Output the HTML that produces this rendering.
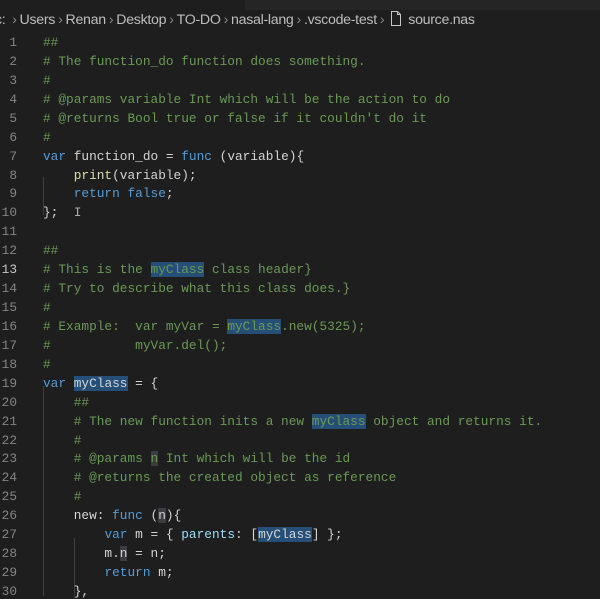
<!DOCTYPE html>
<html><head><meta charset="utf-8"><style>
html,body{margin:0;padding:0;background:#1e1e1e;width:600px;height:596px;overflow:hidden}
.top{position:absolute;left:0;top:0;width:600px;height:10px;background:#252526}
.tab{position:absolute;left:0;top:0;width:245px;height:10px;background:#1e1e1e}
.bc{position:absolute;left:-5px;top:11px;font:14.2px "Liberation Sans",sans-serif;color:#bdbdbd;white-space:nowrap;letter-spacing:-0.3px}
.bc span.s{color:#8a8a8a;margin:0 3px}
.ln{position:absolute;left:0;width:17px;text-align:right;font:12.8px "Liberation Mono",monospace;color:#858585}
.code{position:absolute;left:43px;font:12.8px "Liberation Mono",monospace;color:#d4d4d4;white-space:pre}
.c{color:#6a9955}.k{color:#569cd6}.f{color:#dcdcaa}.v{color:#9cdcfe}.n{color:#b5cea8}
.h{background:#264f78}.h2{background:#3a3d41}
.g{position:absolute;width:1px;background:#404040}
</style></head><body>
<div class="top"><div class="tab"></div></div>
<div class="bc">c: <span class="s">›</span>Users<span class="s">›</span>Renan<span class="s">›</span>Desktop<span class="s">›</span>TO-DO<span class="s">›</span>nasal-lang<span class="s">›</span>.vscode-test<span class="s">›</span><svg width="12" height="15" viewBox="0 0 12 15" style="vertical-align:-2px;margin:0 6px 0 3px"><path d="M1.5 .5h6l3 3v11h-9z M7.5 .5v3h3" fill="none" stroke="#c5c5c5"/></svg>source.nas</div>
<div class="g" style="left:43px;top:177px;height:38px"></div>
<div class="g" style="left:43px;top:386px;height:210px"></div>
<div class="g" style="left:74px;top:538px;height:57px"></div>
<div id="L"></div>
<script>
var lines=[
'<span class="c">##</span>',
'<span class="c"># The function_do function does something.</span>',
'<span class="c">#</span>',
'<span class="c"># @params variable Int which will be the action to do</span>',
'<span class="c"># @returns Bool true or false if it couldn\'t do it</span>',
'<span class="c">#</span>',
'<span class="k">var</span> function_do = <span class="k">func</span> (variable){',
'    <span class="f">print</span>(variable);',
'    <span class="k">return</span> <span class="k">false</span>;',
'};  <span style="color:#aaa">I</span>',
'',
'<span class="c">##</span>',
'<span class="c"># This is the <span class="h">myClass</span> class header}</span>',
'<span class="c"># Try to describe what this class does.}</span>',
'<span class="c">#</span>',
'<span class="c"># Example:  var myVar = <span class="h">myClass</span>.new(5325);</span>',
'<span class="c">#           myVar.del();</span>',
'<span class="c">#</span>',
'<span class="k">var</span> <span class="h">myClass</span> = {',
'    <span class="c">##</span>',
'    <span class="c"># The new function inits a new <span class="h">myClass</span> object and returns it.</span>',
'    <span class="c">#</span>',
'    <span class="c"># @params <span class="h2">n</span> Int which will be the id</span>',
'    <span class="c"># @returns the created object as reference</span>',
'    <span class="c">#</span>',
'    new: <span class="k">func</span> (<span class="h2">n</span>){',
'        <span class="k">var</span> m = { <span class="v">parents</span>: [<span class="h">myClass</span>] };',
'        m.<span class="h2">n</span> = n;',
'        <span class="k">return</span> m;',
'    },'
];
var h='';
for(var i=0;i<lines.length;i++){
 var y=35+i*18.93;
 h+='<div class="ln" style="top:'+y+'px;'+(i==12?'color:#c6c6c6':'')+'">'+(i+1)+'</div>';
 h+='<div class="code" style="top:'+y+'px">'+lines[i]+'</div>';
}
document.getElementById('L').innerHTML=h;
</script>
</body></html>
